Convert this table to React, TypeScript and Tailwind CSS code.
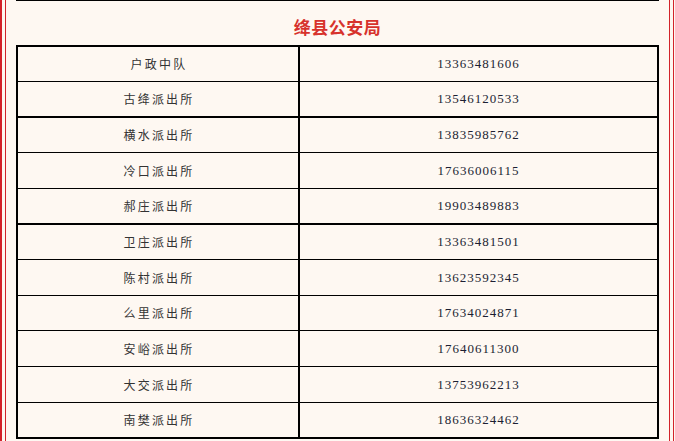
const ROWS = [
  { name: '户政中队', phone: '13363481606', cls: 'h-[35px] border-b' },
  { name: '古绛派出所', phone: '13546120533', cls: 'h-[36px] border-b-2' },
  { name: '横水派出所', phone: '13835985762', cls: 'h-[35px] border-b' },
  { name: '冷口派出所', phone: '17636006115', cls: 'h-[36px] border-b' },
  { name: '郝庄派出所', phone: '19903489883', cls: 'h-[36px] border-b-2' },
  { name: '卫庄派出所', phone: '13363481501', cls: 'h-[35px] border-b' },
  { name: '陈村派出所', phone: '13623592345', cls: 'h-[36px] border-b' },
  { name: '么里派出所', phone: '17634024871', cls: 'h-[35px] border-b' },
  { name: '安峪派出所', phone: '17640611300', cls: 'h-[36px] border-b' },
  { name: '大交派出所', phone: '13753962213', cls: 'h-[36px] border-b' },
  { name: '南樊派出所', phone: '18636324462', cls: 'h-[34px] border-b-0' },
]

export default function App() {
  return (
    <div className="w-[675px] h-[441px] bg-[#fef8f2] overflow-hidden">
      <div className="w-[674px] h-full border-l-2 border-r border-[#d2232a] px-[3px]">
        <div className="h-full border-x border-[#d2232a] px-[10px]">
          <div className="h-px bg-black w-[643px]" />

          <div className="h-[44px] flex items-center justify-center pt-[8px]">
            <h2
              className="text-[17px] font-bold text-[#d7322c] tracking-[0.5px]"
              style={{ fontFamily: "'Noto Sans CJK SC', sans-serif" }}
            >
              绛县公安局
            </h2>
          </div>

          {/* 联系表 */}
          <div className="border-2 border-black w-[643px]">
            {ROWS.map(r => (
              <div key={r.name} className={`flex border-black ${r.cls}`}>
                <div
                  className="w-[282px] border-r-2 border-black flex items-center justify-center text-[12px] text-[#333] tracking-[2.2px] pl-[2px]"
                  style={{ fontFamily: "'Noto Sans CJK SC', sans-serif" }}
                >
                  {r.name}
                </div>
                <div
                  className="flex-1 flex items-center justify-center text-[13px] text-[#1c1f33] tracking-[1px]"
                  style={{ fontFamily: "'Liberation Serif', serif" }}
                >
                  {r.phone}
                </div>
              </div>
            ))}
          </div>
        </div>
      </div>
    </div>
  )
}
